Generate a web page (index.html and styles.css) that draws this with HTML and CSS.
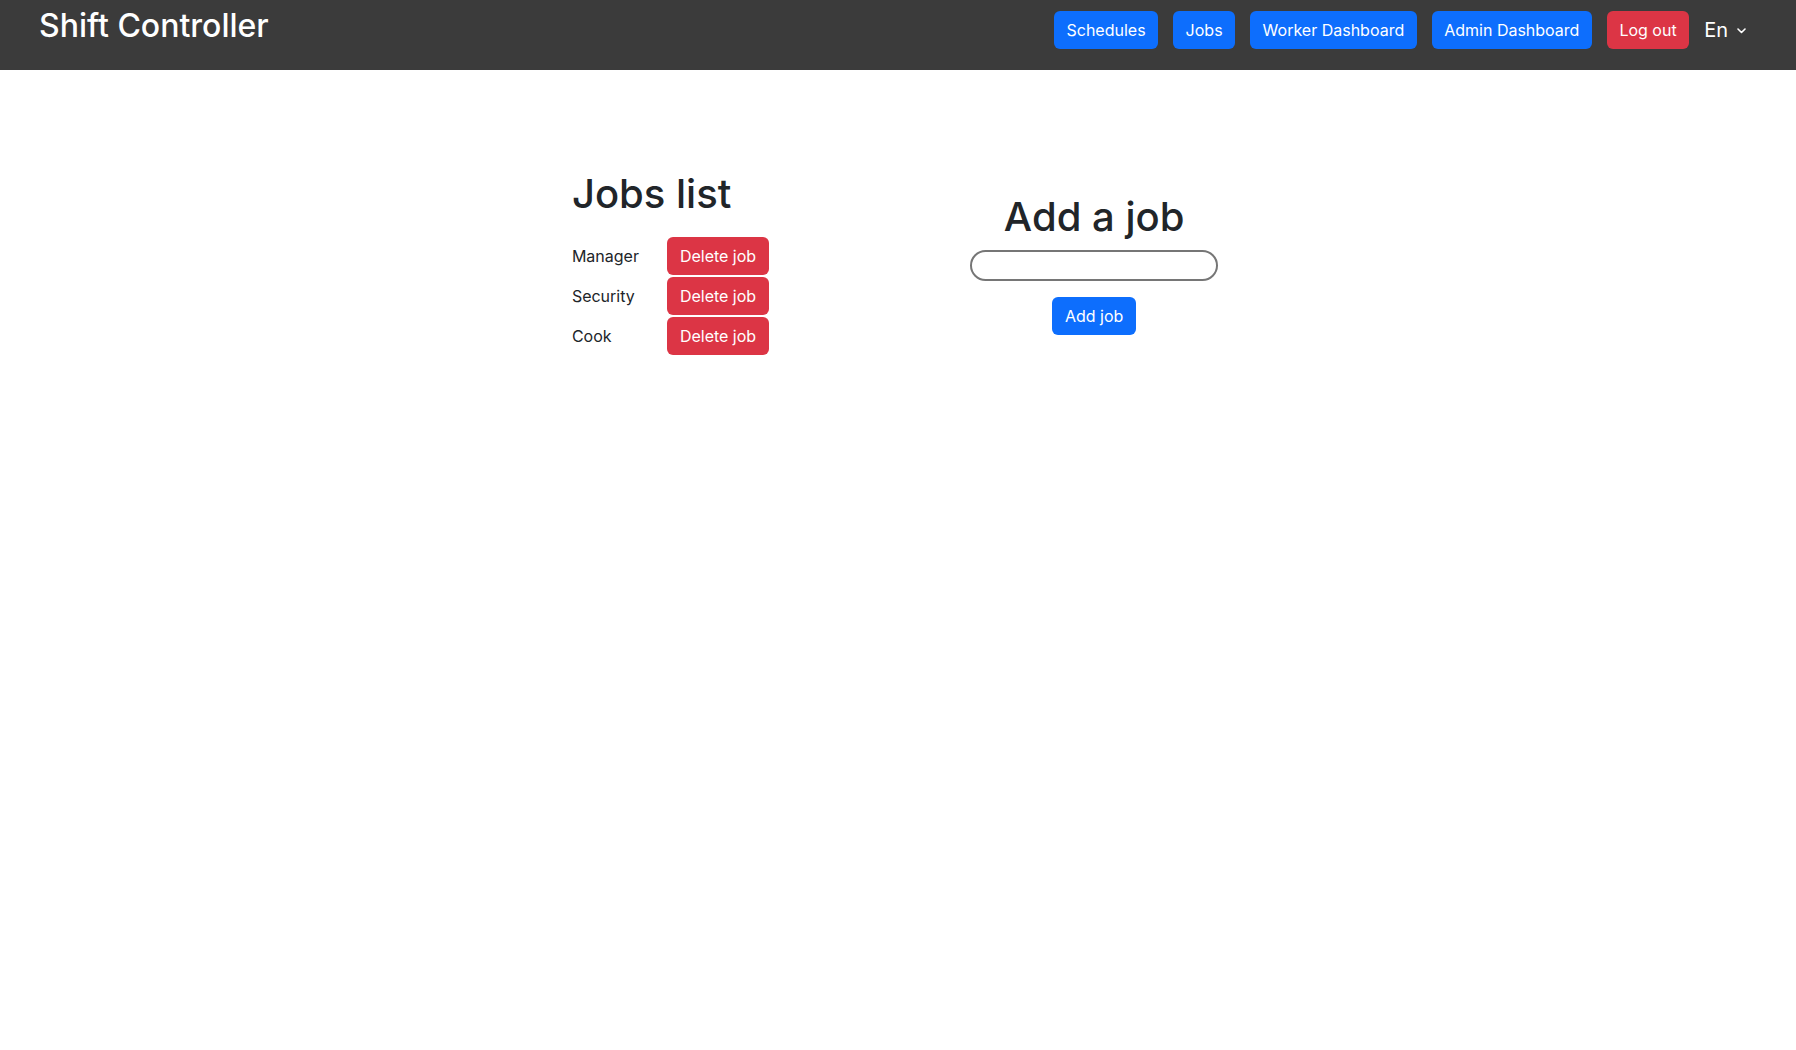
FILE: index.html
```html
<!DOCTYPE html>
<html lang="en">
<head>
<meta charset="utf-8">
<title>Shift Controller</title>
<link rel="stylesheet" href="styles.css">
</head>
<body>
<header class="topbar">
  <div class="brand">Shift Controller</div>
  <nav class="nav">
    <a class="btn btn-blue nav-btn">Schedules</a>
    <a class="btn btn-blue nav-btn">Jobs</a>
    <a class="btn btn-blue nav-btn">Worker Dashboard</a>
    <a class="btn btn-blue nav-btn">Admin Dashboard</a>
    <a class="btn btn-red nav-btn">Log out</a>
    <div class="lang">En
      <svg class="chev" width="9" height="6" viewBox="0 0 9 6"><polyline points="1,1 4.5,4.5 8,1" fill="none" stroke="#fff" stroke-width="1.6" stroke-linecap="round" stroke-linejoin="round"/></svg>
    </div>
  </nav>
</header>
<main class="content">
  <section class="jobs">
    <h1 class="title">Jobs list</h1>
    <div class="job-rows">
      <span class="job-name">Manager</span><button class="btn btn-red">Delete job</button>
      <span class="job-name">Security</span><button class="btn btn-red">Delete job</button>
      <span class="job-name">Cook</span><button class="btn btn-red">Delete job</button>
    </div>
  </section>
  <section class="add">
    <h1 class="title">Add a job</h1>
    <input class="job-input" type="text">
    <button class="btn btn-blue">Add job</button>
  </section>
</main>
</body>
</html>
```
FILE: styles.css
```css
* { box-sizing: border-box; }
html, body { margin: 0; padding: 0; }
body {
  font-family: Inter, "Noto Sans", sans-serif;
  font-size: 16px;
  color: #212529;
  background: #fff;
}
.topbar {
  height: 70px;
  background: #3b3b3b;
  display: flex;
  justify-content: space-between;
  align-items: flex-start;
  padding: 0 50px 0 39px;
}
.brand {
  font-family: Inter, "Noto Sans", sans-serif;
  font-size: 32px;
  font-weight: 500;
  line-height: 39px;
  margin-top: 6px;
  color: #fff;
}
.nav {
  display: flex;
  align-items: center;
  gap: 15px;
  padding-top: 11px;
}
.btn {
  display: inline-block;
  font-family: Inter, "Noto Sans", sans-serif;
  font-size: 16px;
  line-height: 24px;
  padding: 7px 13px;
  border: none;
  border-radius: 6px;
  color: #fff;
  cursor: pointer;
  white-space: nowrap;
}
.nav-btn { padding: 7px 12.5px; }
.btn-blue { background: #0d6efd; }
.btn-red { background: #dc3545; }
.lang {
  color: #fff;
  font-size: 20px;
  line-height: 24px;
  display: flex;
  align-items: center;
  gap: 9px;
  margin-left: 0;
}
.chev { margin-top: 1px; }
.content {
  display: flex;
  justify-content: center;
  align-items: center;
  gap: 201px;
  padding-top: 98px;
  padding-right: 6px;
}
.title {
  font-size: 40px;
  font-weight: 500;
  line-height: 51px;
  margin: 0;
}
.jobs .title { margin-bottom: 18px; }
.job-rows {
  display: grid;
  grid-template-columns: 95px auto;
  row-gap: 2px;
  align-items: center;
}
.job-name { font-size: 16px; }
.add {
  display: flex;
  flex-direction: column;
  align-items: center;
  margin-top: 3px;
}
.job-input {
  width: 248px;
  height: 31px;
  margin-top: 8px;
  border: 2px solid #767676;
  border-radius: 16px;
  background: #fff;
  font: inherit;
}
.add .btn { margin-top: 16px; }
```
